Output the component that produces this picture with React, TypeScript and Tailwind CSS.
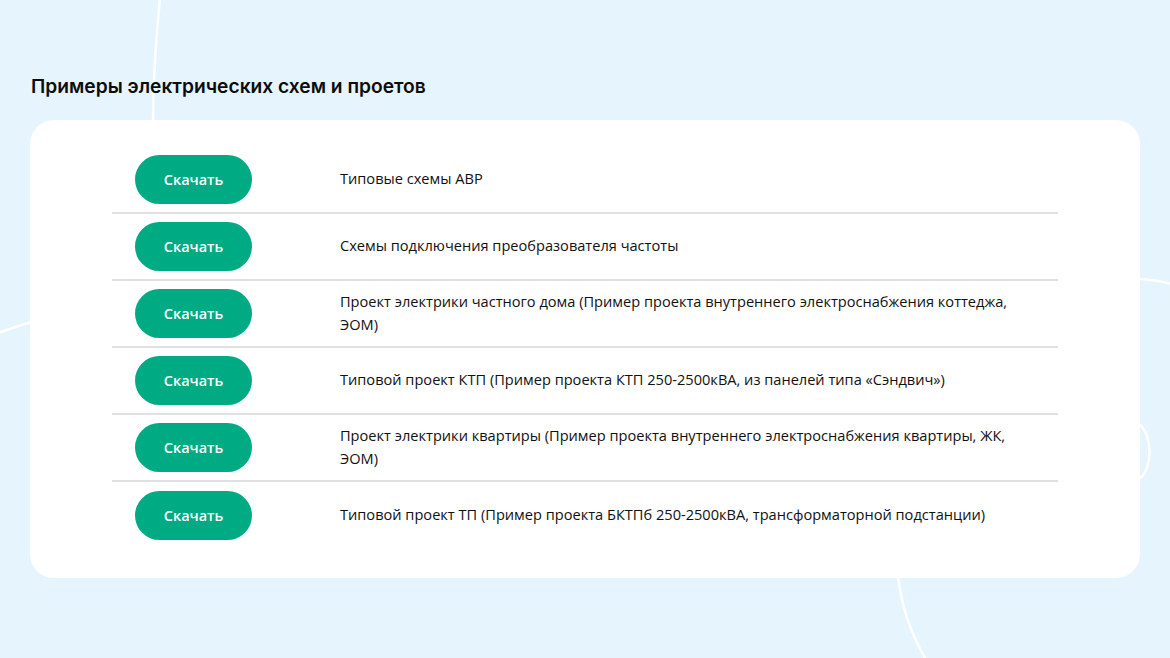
import React from 'react';

const items = [
  'Типовые схемы АВР',
  'Схемы подключения преобразователя частоты',
  'Проект электрики частного дома (Пример проекта внутреннего электроснабжения коттеджа, ЭОМ)',
  'Типовой проект КТП (Пример проекта КТП 250-2500кВА, из панелей типа «Сэндвич»)',
  'Проект электрики квартиры (Пример проекта внутреннего электроснабжения квартиры, ЖК, ЭОМ)',
  'Типовой проект ТП (Пример проекта БКТПб 250-2500кВА, трансформаторной подстанции)',
];

const Decor: React.FC = () => (
  <svg className="absolute inset-0 w-full h-full pointer-events-none" viewBox="0 0 1170 658" fill="none">
    <g stroke="#ffffff" strokeWidth={2.5} strokeLinecap="round">
      <path d="M160 -2 C156 40 153 80 153 122" />
      <path d="M-2 333 C10 329 20 325 32 322" />
      <path d="M1138 279 C1150 279 1160 281 1172 284" />
      <path d="M1139 424 C1153 434 1153 470 1139 479" />
      <path d="M898 576 C902 610 912 635 926 660" />
    </g>
  </svg>
);

export default function App() {
  return (
    <div className="relative min-h-[658px] w-full bg-[#e6f4fe] overflow-hidden">
      <Decor />
      <div className="relative pt-[75px] px-[30px]">
        <h2 className="ml-px text-[19.2px] leading-[22px] font-semibold text-[#0d0d0d] font-['Inter',sans-serif]">
          Примеры электрических схем и проетов
        </h2>
        <div className="mt-[23px] bg-white rounded-[24px] px-[82px] pt-[27px] pb-[29px]">
          {items.map((t, i) => (
            <div
              key={i}
              className={`flex items-center h-[67px] pl-[23px] ${i < items.length - 1 ? 'border-b-2 border-[#e0e0e0]' : ''}`}
            >
              <button className="shrink-0 w-[117px] h-[49px] rounded-full bg-[#00ab84] text-white text-[14.5px] font-semibold font-['Open_Sans',sans-serif]">
                Скачать
              </button>
              <p className="ml-[88px] pr-[40px] -mt-[2px] text-[14.6px] leading-[23px] text-[#111111] font-['Open_Sans',sans-serif]">
                {t}
              </p>
            </div>
          ))}
        </div>
      </div>
    </div>
  );
}
